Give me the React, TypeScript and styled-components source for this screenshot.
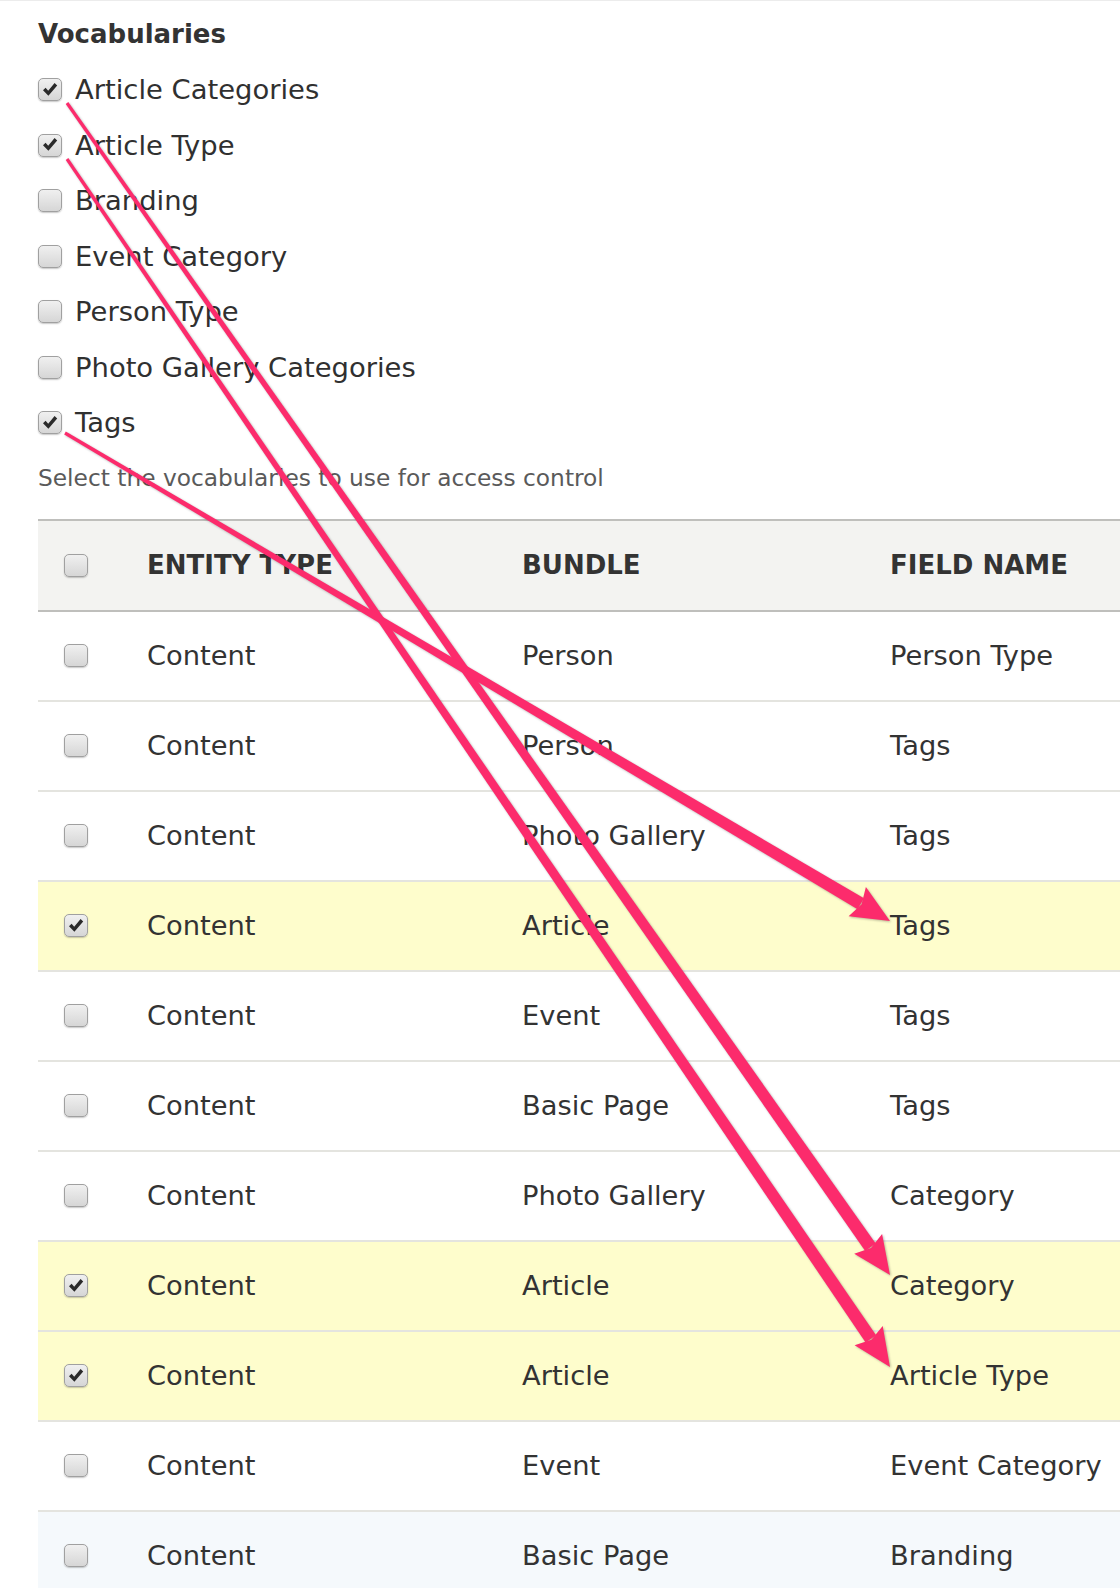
import React from 'react';
import styled, { createGlobalStyle } from 'styled-components';

const GlobalStyle = createGlobalStyle`
  html, body {
    margin: 0;
    padding: 0;
    background: #ffffff;
  }
  body {
    font-family: "DejaVu Sans", "Liberation Sans", sans-serif;
    color: #333333;
  }
`;

const Page = styled.div`
  position: relative;
  width: 1120px;
  min-height: 1588px;
  overflow: hidden;
  border-top: 1px solid #ececec;
  box-sizing: border-box;
`;

const Fieldset = styled.div`
  padding: 17px 0 0 38px;
`;

const Legend = styled.h2`
  margin: 0;
  font-size: 26px;
  font-weight: bold;
  line-height: 32px;
  color: #333333;
`;

const VocabList = styled.ul`
  list-style: none;
  margin: 12px 0 0;
  padding: 0;
`;

const VocabItem = styled.li`
  display: flex;
  align-items: center;
  gap: 13px;
  height: 55.5px;
  font-size: 27.4px;
  color: #303030;
`;

const Description = styled.p`
  margin: 12px 0 0;
  font-size: 23.3px;
  line-height: 30px;
  color: #5a5a5a;
`;

const Table = styled.div`
  margin-top: 26px;
`;

const columns = '109px 375px 368px 1fr';

const HeaderRow = styled.div`
  display: grid;
  grid-template-columns: ${columns};
  align-items: center;
  height: 93px;
  box-sizing: border-box;
  background: #f3f3f1;
  border-top: 2px solid #bfbfbc;
  border-bottom: 2px solid #bfbfbc;
`;

const HeadCell = styled.div`
  font-size: 26px;
  font-weight: bold;
  color: #333333;
  text-transform: uppercase;
  white-space: nowrap;
`;

const Row = styled.div<{ $tone?: 'selected' | 'hover' }>`
  display: grid;
  grid-template-columns: ${columns};
  align-items: center;
  height: 90px;
  box-sizing: border-box;
  border-bottom: 2px solid #e4e4df;
  background: ${p =>
    p.$tone === 'selected' ? '#fefdcc' : p.$tone === 'hover' ? '#f5f9fc' : '#ffffff'};
`;

const Cell = styled.div`
  font-size: 27.3px;
  color: #333333;
  white-space: nowrap;
`;

const CheckCell = styled.div`
  display: flex;
  align-items: center;
  padding-left: 26px;
`;

const Box = styled.span`
  display: inline-flex;
  align-items: center;
  justify-content: center;
  flex-shrink: 0;
  width: 24px;
  height: 23px;
  box-sizing: border-box;
  border: 1.5px solid #a0a0a0;
  border-radius: 5px;
  background: linear-gradient(#f0f0f0, #d6d6d6);
  box-shadow: 0 1px 1.5px rgba(0, 0, 0, 0.22);
`;

const Overlay = styled.svg`
  position: absolute;
  top: 0;
  left: 0;
  pointer-events: none;
  filter: drop-shadow(1px 1.5px 1px rgba(0, 0, 0, 0.28));
`;

function Checkbox({ checked }: { checked?: boolean }) {
  return (
    <Box>
      {checked && (
        <svg width="20" height="20" viewBox="0 0 20 20">
          <path d="M3 10.2 L5.6 7.8 L8.2 10.8 L14.6 3 L17.2 5.4 L8.4 15.8 Z" fill="#2a2a2a" />
        </svg>
      )}
    </Box>
  );
}

const vocabularies = [
  { name: 'Article Categories', checked: true },
  { name: 'Article Type', checked: true },
  { name: 'Branding' },
  { name: 'Event Category' },
  { name: 'Person Type' },
  { name: 'Photo Gallery Categories' },
  { name: 'Tags', checked: true },
];

type Tone = 'selected' | 'hover' | undefined;

const rows: { bundle: string; field: string; tone?: Tone }[] = [
  { bundle: 'Person', field: 'Person Type' },
  { bundle: 'Person', field: 'Tags' },
  { bundle: 'Photo Gallery', field: 'Tags' },
  { bundle: 'Article', field: 'Tags', tone: 'selected' },
  { bundle: 'Event', field: 'Tags' },
  { bundle: 'Basic Page', field: 'Tags' },
  { bundle: 'Photo Gallery', field: 'Category' },
  { bundle: 'Article', field: 'Category', tone: 'selected' },
  { bundle: 'Article', field: 'Article Type', tone: 'selected' },
  { bundle: 'Event', field: 'Event Category' },
  { bundle: 'Basic Page', field: 'Branding', tone: 'hover' },
];

// annotation arrows, drawn over the form
const arrows: { from: [number, number]; to: [number, number] }[] = [
  { from: [67, 102], to: [890, 1274] },
  { from: [67, 158], to: [890, 1366] },
  { from: [65, 432], to: [890, 920] },
];

function arrowShapes(from: [number, number], to: [number, number]) {
  const [x0, y0] = from;
  const [x1, y1] = to;
  const len = Math.hypot(x1 - x0, y1 - y0);
  const ux = (x1 - x0) / len;
  const uy = (y1 - y0) / len;
  const px = -uy;
  const py = ux;
  const headLen = 38;
  const headHalf = 17;
  const bx = x1 - ux * headLen;
  const by = y1 - uy * headLen;
  const ex = bx + ux * 4;
  const ey = by + uy * 4;
  const w0 = 1.6;
  const w1 = 6.4;
  const shaft = [
    [x0 + px * w0, y0 + py * w0],
    [ex + px * w1, ey + py * w1],
    [ex - px * w1, ey - py * w1],
    [x0 - px * w0, y0 - py * w0],
  ];
  const head = [
    [x1, y1],
    [bx + px * headHalf, by + py * headHalf],
    [bx + ux * 5, by + uy * 5],
    [bx - px * headHalf, by - py * headHalf],
  ];
  const fmt = (pts: number[][]) => pts.map(p => `${p[0].toFixed(1)},${p[1].toFixed(1)}`).join(' ');
  return { shaft: fmt(shaft), head: fmt(head) };
}

export default function App() {
  return (
    <Page>
      <GlobalStyle />
      <Fieldset>
        <Legend>Vocabularies</Legend>
        <VocabList>
          {vocabularies.map(v => (
            <VocabItem key={v.name}>
              <Checkbox checked={v.checked} />
              {v.name}
            </VocabItem>
          ))}
        </VocabList>
        <Description>Select the vocabularies to use for access control</Description>

        <Table>
          <HeaderRow>
            <CheckCell>
              <Checkbox />
            </CheckCell>
            <HeadCell>Entity type</HeadCell>
            <HeadCell>Bundle</HeadCell>
            <HeadCell>Field name</HeadCell>
          </HeaderRow>
          {rows.map((r, i) => (
            <Row key={i} $tone={r.tone}>
              <CheckCell>
                <Checkbox checked={r.tone === 'selected'} />
              </CheckCell>
              <Cell>Content</Cell>
              <Cell>{r.bundle}</Cell>
              <Cell>{r.field}</Cell>
            </Row>
          ))}
        </Table>
      </Fieldset>

      <Overlay width="1120" height="1588" viewBox="0 0 1120 1588">
        {arrows.map((a, i) => {
          const s = arrowShapes(a.from, a.to);
          return (
            <g key={i} fill="#fc2b6c">
              <polygon points={s.shaft} />
              <polygon points={s.head} />
            </g>
          );
        })}
      </Overlay>
    </Page>
  );
}
